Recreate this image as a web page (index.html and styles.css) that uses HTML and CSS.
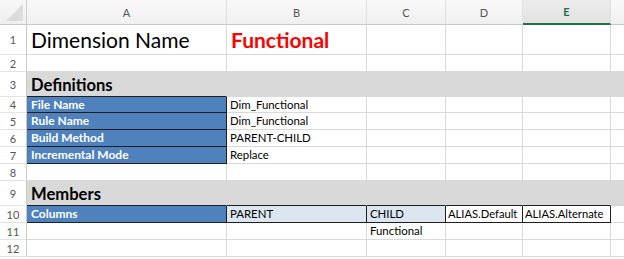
FILE: index.html
```html
<!DOCTYPE html>
<html>
<head>
<meta charset="utf-8">
<link rel="stylesheet" href="styles.css">
</head>
<body>
<div class="sheet">
  <div class="corner"><div class="tri"></div></div>
  <div class="ch">A</div><div class="ch">B</div><div class="ch">C</div><div class="ch">D</div><div class="ch sel">E</div><div class="ch last"></div>

  <div class="rh">1</div>
  <div class="c title">Dimension Name</div><div class="c title red">Functional</div><div class="c"></div><div class="c"></div><div class="c"></div><div class="c last"></div>

  <div class="rh">2</div>
  <div class="c"></div><div class="c"></div><div class="c"></div><div class="c"></div><div class="c"></div><div class="c last"></div>

  <div class="rh">3</div>
  <div class="c band sec bdk">Definitions</div><div class="c band"></div><div class="c band"></div><div class="c band"></div><div class="c band"></div><div class="c band last"></div>

  <div class="rh">4</div>
  <div class="c blue">File Name</div><div class="c val">Dim_Functional</div><div class="c"></div><div class="c"></div><div class="c"></div><div class="c last"></div>

  <div class="rh">5</div>
  <div class="c blue">Rule Name</div><div class="c val">Dim_Functional</div><div class="c"></div><div class="c"></div><div class="c"></div><div class="c last"></div>

  <div class="rh">6</div>
  <div class="c blue">Build Method</div><div class="c val">PARENT-CHILD</div><div class="c"></div><div class="c"></div><div class="c"></div><div class="c last"></div>

  <div class="rh">7</div>
  <div class="c blue">Incremental Mode</div><div class="c val">Replace</div><div class="c"></div><div class="c"></div><div class="c"></div><div class="c last"></div>

  <div class="rh">8</div>
  <div class="c"></div><div class="c"></div><div class="c"></div><div class="c"></div><div class="c"></div><div class="c last"></div>

  <div class="rh">9</div>
  <div class="c band sec bdk">Members</div><div class="c band bdk"></div><div class="c band bdk"></div><div class="c band bdk"></div><div class="c band bdk"></div><div class="c band last"></div>

  <div class="rh">10</div>
  <div class="c blue">Columns</div><div class="c val lb dk">PARENT</div><div class="c val lb dk">CHILD</div><div class="c val dk tight">ALIAS.Default</div><div class="c val dk tight">ALIAS.Alternate</div><div class="c last"></div>

  <div class="rh">11</div>
  <div class="c"></div><div class="c"></div><div class="c val">Functional</div><div class="c"></div><div class="c"></div><div class="c last"></div>

  <div class="rh">12</div>
  <div class="c"></div><div class="c"></div><div class="c"></div><div class="c"></div><div class="c"></div><div class="c last"></div>
</div>
</body>
</html>
```

FILE: styles.css
```css
html, body {
  margin: 0;
  padding: 0;
  background: #ffffff;
}
body {
  font-family: Lato, "Open Sans", sans-serif;
  width: 624px;
  height: 259px;
  overflow: hidden;
}
.sheet {
  display: grid;
  grid-template-columns: 27px 200px 140px 79px 77px 88px 13px;
  grid-template-rows: 25px 30px 17px 25px 16px 17px 17px 17px 17px 25px 17px 17px 17px;
}
.sheet > div {
  box-sizing: border-box;
  border-right: 1px solid #d9d9d9;
  border-bottom: 1px solid #d9d9d9;
  overflow: hidden;
  white-space: nowrap;
}
.corner {
  background: linear-gradient(#f7f7f7, #efefef);
  position: relative;
  border-right-color: #cfcfcf !important;
  border-bottom-color: #c9c9c9 !important;
}
.tri {
  position: absolute;
  right: 3px;
  bottom: 3px;
  width: 0;
  height: 0;
  border-left: 17px solid transparent;
  border-bottom: 17px solid #dcdcdc;
}
.ch {
  background: linear-gradient(#f9f9f9, #f0f0f0);
  color: #555555;
  font-size: 11px;
  display: flex;
  align-items: center;
  justify-content: center;
  border-bottom-color: #c9c9c9 !important;
  border-right-color: #e0e0e0 !important;
}
.ch.sel {
  background: linear-gradient(#ececec, #e2e2e2);
  color: #217346;
  font-weight: 700;
  border-bottom: 2px solid #217346 !important;
}
.rh {
  background: #ffffff;
  color: #555555;
  font-size: 11px;
  display: flex;
  align-items: center;
  justify-content: center;
  border-right-color: #c9c9c9 !important;
  border-bottom-color: #e3e3e3 !important;
}
.c {
  display: flex;
  align-items: center;
  padding: 0 2px 0 3px;
  font-size: 11.2px;
  line-height: 14px;
  color: #000000;
}
.title {
  font-size: 21px;
  line-height: 26px;
  align-items: flex-end;
  padding-left: 4px;
  padding-bottom: 1px;
}
.red {
  color: #ff0000;
  font-weight: 700;
}
.band {
  background: #d9d9d9;
  border-right-color: #d9d9d9 !important;
}
.sec {
  font-size: 16.6px;
  line-height: 20px;
  font-weight: 700;
  align-items: flex-end;
  padding-left: 4px;
  padding-bottom: 1px;
}
.blue {
  background: #4f81bd;
  color: #ffffff;
  font-weight: 700;
  font-size: 12px;
  padding-left: 4px;
  border-right-color: #1f1f1f !important;
  border-bottom-color: #1f1f1f !important;
}
.bdk {
  border-bottom-color: #1f1f1f !important;
}
.dk {
  border-right-color: #1f1f1f !important;
  border-bottom-color: #1f1f1f !important;
}
.lb {
  background: #dce6f1;
}
.val {
  font-size: 11.4px;
}
.tight {
  padding-left: 2px;
  font-size: 11.2px;
}
.last {
  border-right: none !important;
}
```
